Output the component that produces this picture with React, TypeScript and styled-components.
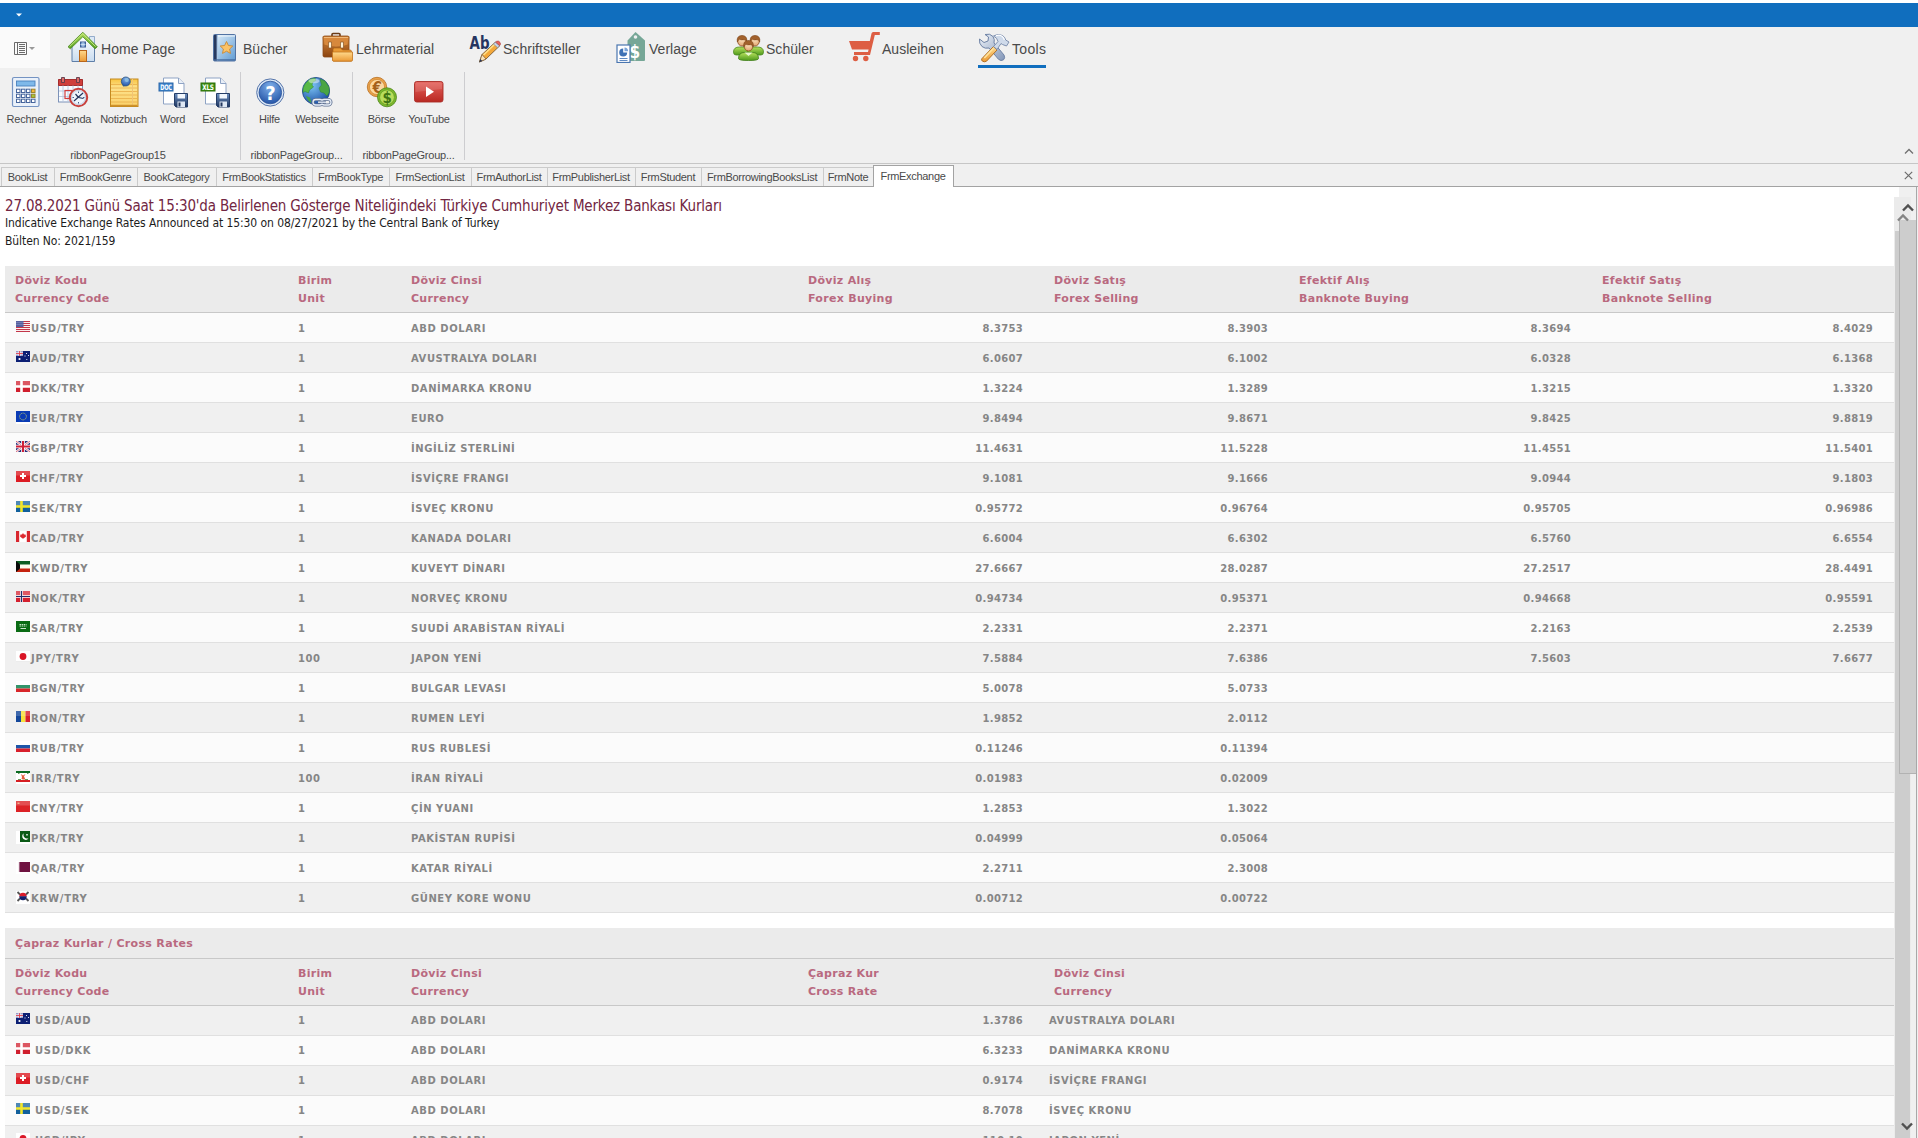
import React from 'react';
import styled, { createGlobalStyle } from 'styled-components';

const UI = '"Liberation Sans", Arial, sans-serif';
const PAGE = '"DejaVu Sans Condensed", "DejaVu Sans", Tahoma, sans-serif';
const TABLE = '"DejaVu Sans", Verdana, sans-serif';

const GlobalStyle = createGlobalStyle`
  *, *::before, *::after { box-sizing: border-box; }
  html, body { margin: 0; padding: 0; overflow: hidden; background: #fff; }
  svg { display: block; flex: none; }
`;

const Window = styled.div`
  display: flex;
  flex-direction: column;
  width: 1918px;
  height: 1138px;
  padding-top: 3px;
  overflow: hidden;
  background: #fff;
  font-family: ${UI};
  color: #4a4a4a;
`;

const TitleBar = styled.header`
  display: flex;
  align-items: center;
  flex: none;
  height: 24px;
  padding-left: 16px;
  background: #106ebe;
`;

const Ribbon = styled.section`
  display: flex;
  flex-direction: column;
  flex: none;
  height: 137px;
  background: #f0f0f0;
  border-bottom: 1px solid #c6c6c6;
`;

const RibbonTabs = styled.nav`
  display: flex;
  height: 41px;
`;

const FileMenu = styled.div`
  display: flex;
  align-items: center;
  gap: 2px;
  width: 50px;
  margin-right: 17px;
  padding: 2px 0 0 14px;
  background: #fafafa;
`;

const RibbonTab = styled.div<{ $w: number }>`
  display: flex;
  width: ${(p) => p.$w}px;
`;

const TabFace = styled.div<{ $active?: boolean }>`
  display: flex;
  align-items: center;
  gap: 2px;
  height: 41px;
  padding-top: 4px;
  padding-bottom: 2px;
  border-bottom: 3px solid ${(p) => (p.$active ? '#106ebe' : 'transparent')};
  font-size: 14px;
  line-height: 18px;
  white-space: nowrap;
  letter-spacing: ${(p) => (p.$active ? '0.3px' : '0.03px')};
`;

const TabLabel = styled.span`
  padding-top: 4px;
`;

const RibbonBody = styled.div`
  display: flex;
  align-items: flex-start;
  flex: 1;
  padding-top: 4px;
`;

const Group = styled.div<{ $w: number; $pad: number }>`
  display: flex;
  flex-direction: column;
  justify-content: space-between;
  width: ${(p) => p.$w}px;
  height: 88px;
  padding-left: ${(p) => p.$pad}px;
  border-right: 1px solid #cdcdd0;
`;

const GroupItems = styled.div`
  display: flex;
`;

const GroupCaption = styled.div<{ $pad: number; $shift: number }>`
  margin-left: -${(p) => p.$pad}px;
  margin-bottom: -1px;
  padding-right: ${(p) => p.$shift}px;
  font-size: 11px;
  line-height: 12px;
  letter-spacing: -0.22px;
  text-align: center;
  white-space: nowrap;
`;

const ToolButton = styled.div<{ $w: number }>`
  display: flex;
  flex-direction: column;
  align-items: center;
  gap: 5px;
  width: ${(p) => p.$w}px;
  padding-top: 4px;
  font-size: 11px;
  line-height: 13px;
  letter-spacing: -0.25px;
  white-space: nowrap;
`;

const RibbonEnd = styled.div`
  display: flex;
  flex: 1;
  align-self: stretch;
  align-items: flex-end;
  justify-content: flex-end;
  padding: 0 4px 9px 0;
`;

const DocTabs = styled.div`
  display: flex;
  align-items: flex-end;
  flex: none;
  height: 23px;
  padding-left: 1px;
  background: #f0f0f0;
  border-bottom: 1px solid #a3a3a3;
`;

const DocTab = styled.div<{ $w: number; $active?: boolean }>`
  display: flex;
  align-items: center;
  justify-content: center;
  width: ${(p) => p.$w}px;
  height: ${(p) => (p.$active ? 22 : 19)}px;
  margin-bottom: ${(p) => (p.$active ? -1 : 0)}px;
  padding-right: 1px;
  padding-bottom: ${(p) => (p.$active ? 1 : 0)}px;
  border: 1px solid ${(p) => (p.$active ? '#a3a3a3' : '#cbcbcb')};
  border-bottom: 0;
  border-right-width: ${(p) => (p.$active ? 1 : 0)}px;
  background: ${(p) => (p.$active ? '#fff' : '#f0f0f0')};
  font-size: 11px;
  letter-spacing: -0.31px;
  white-space: nowrap;
`;

const DocTabsEnd = styled.div`
  display: flex;
  flex: 1;
  align-self: stretch;
  align-items: center;
  justify-content: flex-end;
  padding: 0 5px 0 0;
`;

const Workspace = styled.main`
  display: flex;
  flex: 1;
  min-height: 0;
  overflow: hidden;
`;

const Page = styled.article`
  flex: none;
  width: 1894px;
  height: 951px;
  padding: 10px 0 0 5px;
  overflow: hidden;
  background: #fff;
  font-family: ${PAGE};
`;

const Headline = styled.h1`
  margin: 0;
  font-size: 15px;
  font-weight: 400;
  line-height: 19px;
  letter-spacing: -0.18px;
  color: #722642;
`;

const Subline = styled.p<{ $h: number }>`
  margin: 0;
  font-size: 12px;
  line-height: ${(p) => p.$h}px;
  letter-spacing: -0.08px;
  color: #1c1c1c;
`;

const RateTable = styled.section<{ $top: number }>`
  margin-top: ${(p) => p.$top}px;
  font-family: ${TABLE};
`;

const columns = '283px 113px 397px 246px 245px 303px 302px';

const TableCaption = styled.div`
  height: 31px;
  padding: 1px 10px 0;
  background: #ebebeb;
  border-bottom: 1px solid #c8c8c8;
  color: #b9697f;
  font-size: 11px;
  font-weight: 700;
  line-height: 30px;
  letter-spacing: 0.32px;
`;

const HeadRow = styled.div`
  display: grid;
  grid-template-columns: ${columns};
  height: 47px;
  padding-top: 6px;
  background: #ebebeb;
  border-bottom: 1px solid #c8c8c8;
`;

const HeadCell = styled.div`
  padding-left: 10px;
  color: #b9697f;
  font-size: 11px;
  font-weight: 700;
  line-height: 18px;
  letter-spacing: 0.3px;
`;

const Row = styled.div<{ $shade: boolean; $lift?: boolean }>`
  display: grid;
  grid-template-columns: ${columns};
  height: 30px;
  background: ${(p) => (p.$shade ? '#f0f0f0' : '#fbfbfb')};
  border-bottom: 1px solid #e0e0e0;
  color: #868686;
  font-size: 10px;
  font-weight: 700;
  line-height: ${(p) => (p.$lift ? 29 : 31)}px;
  letter-spacing: 0.55px;
`;

const CodeCell = styled.div<{ $gap: number }>`
  display: flex;
  gap: ${(p) => p.$gap}px;
  padding-left: 11px;
  letter-spacing: 0.75px;
`;

const FlagBox = styled.span<{ $white: boolean; $top: number }>`
  display: block;
  height: 13px;
  margin-top: ${(p) => p.$top}px;
  background: ${(p) => (p.$white ? '#fff' : 'transparent')};
`;

const Cell = styled.div<{ $pad?: number }>`
  padding-left: ${(p) => p.$pad ?? 10}px;
`;

const NumCell = styled.div`
  padding-right: 21px;
  letter-spacing: 0.3px;
  text-align: right;
`;

const ScrollArea = styled.aside`
  position: relative;
  flex: none;
  width: 24px;
  height: 951px;
  background: #f0f0f0;
`;

const WhiteCorner = styled.div`
  height: 10px;
  width: 5px;
  background: #fff;
`;

const GhostBar = styled.div`
  position: absolute;
  top: 10px;
  left: 0;
  width: 17px;
  height: 941px;
  padding-top: 34px;
  background: #ebebeb;
`;

const GhostThumb = styled.div`
  height: 100%;
  margin-left: 1px;
  width: 15px;
  background: #cdcdcd;
`;

const FrontBar = styled.div`
  position: absolute;
  top: 0;
  left: 5px;
  width: 18px;
  height: 951px;
  border-right: 1px solid #a8a8a8;
`;

const FrontThumb = styled.div`
  margin-top: 33px;
  height: 554px;
  border: 1px solid #b2b2b2;
  border-top: 0;
  border-right: 0;
  background: #cdcdcd;
`;

const Mark = styled.span<{ $x: number; $y: number }>`
  position: absolute;
  left: ${(p) => p.$x}px;
  top: ${(p) => p.$y}px;
`;

/* ---------- ribbon icons, all on a 32 unit grid ---------- */

const Icon = ({ children }: { children: React.ReactNode }) => (
  <svg width="32" height="32" viewBox="0 0 32 32">{children}</svg>
);

const Gradients = () => (
  <svg width="0" height="0">
    <defs>
      <linearGradient id="gOrange" x1="0" y1="0" x2="0" y2="1"><stop offset="0" stopColor="#ffd98c" /><stop offset="1" stopColor="#eb9a35" /></linearGradient>
      <linearGradient id="gBrown" x1="0" y1="0" x2="0" y2="1"><stop offset="0" stopColor="#d98a3c" /><stop offset="1" stopColor="#8a4310" /></linearGradient>
      <linearGradient id="gBlue" x1="0" y1="0" x2="1" y2="1"><stop offset="0" stopColor="#e3f1fb" /><stop offset="1" stopColor="#5f9bd2" /></linearGradient>
      <linearGradient id="gHouse" x1="0" y1="0" x2="0" y2="1"><stop offset="0" stopColor="#ffffff" /><stop offset="1" stopColor="#c9dcf0" /></linearGradient>
      <linearGradient id="gGreen" x1="0" y1="0" x2="0" y2="1"><stop offset="0" stopColor="#b5e05c" /><stop offset="1" stopColor="#4f9a1c" /></linearGradient>
      <linearGradient id="gRed" x1="0" y1="0" x2="0" y2="1"><stop offset="0" stopColor="#e5625c" /><stop offset="1" stopColor="#b92923" /></linearGradient>
      <linearGradient id="gNote" x1="0" y1="0" x2="0" y2="1"><stop offset="0" stopColor="#f9c440" /><stop offset="0.3" stopColor="#fde28c" /><stop offset="1" stopColor="#fbd16a" /></linearGradient>
      <linearGradient id="gSteel" x1="0" y1="0" x2="1" y2="1"><stop offset="0" stopColor="#eef3f9" /><stop offset="1" stopColor="#8296b8" /></linearGradient>
      <linearGradient id="gNavy" x1="0" y1="0" x2="0" y2="1"><stop offset="0" stopColor="#6d8fc0" /><stop offset="1" stopColor="#1d355f" /></linearGradient>
      <radialGradient id="gHelp" cx="0.5" cy="0.25" r="0.8"><stop offset="0" stopColor="#7fb0ea" /><stop offset="1" stopColor="#1f4fa3" /></radialGradient>
      <radialGradient id="gGlobe" cx="0.35" cy="0.3" r="0.8"><stop offset="0" stopColor="#7cc4f5" /><stop offset="1" stopColor="#14459c" /></radialGradient>
      <radialGradient id="gFace" cx="0.5" cy="0.3" r="0.8"><stop offset="0" stopColor="#ffe7c4" /><stop offset="1" stopColor="#dd9a62" /></radialGradient>
    </defs>
  </svg>
);

const HomeIcon = () => (
  <Icon>
    <path d="M22.5 5.5h5v9h-5z" fill="#dce8f5" stroke="#7f9cc0" strokeWidth="0.8" />
    <path d="M5 15 16 4.5 27.5 15V30.5H5z" fill="url(#gHouse)" stroke="#5f7fa8" strokeWidth="1" />
    <path d="M1 15.8 15.8 1.2 30.3 15.8 28 17.8 15.8 5.8 3.3 17.8z" fill="url(#gGreen)" stroke="#4c8a22" strokeWidth="0.8" />
    <path d="M2.6 15.6 15.8 2.6 28.6 15.6" fill="none" stroke="#cdec8c" strokeWidth="0.9" />
    <rect x="13.5" y="11" width="5" height="5" fill="#7fa8d8" stroke="#3f5f96" />
    <path d="M16 11v5M13.5 13.5h5" stroke="#dce9f7" strokeWidth="0.7" />
    <rect x="12.5" y="19.5" width="7" height="11" fill="url(#gOrange)" stroke="#b8661c" />
  </Icon>
);

const BookIcon = () => (
  <Icon>
    <rect x="4.5" y="3.5" width="22" height="26.5" rx="1" fill="url(#gBlue)" stroke="#5273a3" />
    <rect x="5" y="4" width="2.8" height="25.5" fill="#26395f" />
    <rect x="7.8" y="4" width="1.2" height="25.5" fill="#a9c6e4" />
    <path d="M9 5h17" stroke="#fff" strokeWidth="1.2" opacity="0.7" />
    <rect x="5" y="28.3" width="21" height="1.2" fill="#44689c" />
    <path d="m17.5 10.5 1.9 4 4.4.5-3.2 3 .9 4.4-4-2.200-4 2.200.9-4.400-3.200-3 4.400-.5z" fill="#fbc368" stroke="#c98a35" strokeWidth="0.9" />
  </Icon>
);

const BriefcaseIcon = () => (
  <Icon>
    <path d="M10 5V3.500q0-1 1-1h6q1 0 1 1V5" fill="none" stroke="#6b3b17" strokeWidth="1.6" />
    <rect x="1" y="5" width="26" height="21" rx="1.5" fill="url(#gBrown)" stroke="#8a4a18" strokeWidth="0.8" />
    <path d="M1 5.500h26l-1 8.500q-12 4-24 0z" fill="#d7883c" stroke="#a05c20" strokeWidth="0.6" />
    <path d="M2 6.500h24" stroke="#f0b878" />
    <path d="M6.500 11h3v6h-3zM18.500 11h3v6h-3z" fill="#fff3da" stroke="#8a5522" strokeWidth="0.7" />
    <path d="M11 18.500q0-1.500 1.500-1.500h6l2 2H28q1.500 0 1.500 1.500V30H11z" fill="#e99a35" stroke="#b06418" strokeWidth="0.7" />
    <path d="M10.500 21h20v8q0 1.200-1.200 1.200H11.700q-1.200 0-1.200-1.200z" fill="url(#gOrange)" stroke="#c1741d" strokeWidth="0.8" />
  </Icon>
);

const IconText = styled.text`
  font-family: ${PAGE};
  font-weight: 700;
`;

const WriterIcon = () => (
  <Icon>
    <IconText x="0.5" y="17.5" fontSize="17" textLength="20" lengthAdjust="spacingAndGlyphs" fill="#263560">Ab</IconText>
    <path d="m10.500 31 2.500-7.500L26 11.500l4.500 3.500L17 28z" fill="#f3a83a" stroke="#7a5a34" strokeWidth="0.9" />
    <path d="m14.500 24 12-11.500" stroke="#ffe08a" strokeWidth="1.6" />
    <path d="m10.500 31 2.500-7.500 4 4.500z" fill="#f8e2bb" stroke="#7a5a34" strokeWidth="0.7" />
    <path d="m10.300 31.300 1-3.200 2 2z" fill="#2c3552" />
    <path d="m24.500 13 2-1.800 4 3.600-2 1.800z" fill="#c8d3e5" stroke="#7487a8" strokeWidth="0.6" />
    <path d="m26.500 11 1.300-.8q2-.6 3.200 1.200t-.3 3.200z" fill="#e8625c" stroke="#a83a35" strokeWidth="0.6" />
  </Icon>
);

const PublisherIcon = () => (
  <Icon>
    <path d="M20.500 1 30 9.500V29q0 1-1 1H12.500V9.500z" fill="#76a797" />
    <circle cx="20.500" cy="6" r="1.8" fill="#f0f0f0" />
    <IconText x="14.5" y="26.5" fontSize="17" fill="#fff">$</IconText>
    <rect x="2" y="14" width="13" height="17.500" fill="#fff" stroke="#4a76b0" strokeWidth="1.2" />
    <path d="M8.200 17.500a4 4 0 1 0 4 4h-4z" fill="#3f72b5" />
    <path d="M9.500 16.500a4 4 0 0 1 3.700 3.700H9.500z" fill="#7aa4d8" />
    <path d="M4.500 27.500h8M4.500 29.500h8" stroke="#5f8ac2" />
  </Icon>
);

const Head = ({ x, y }: { x: number; y: number }) => (
  <g transform={`translate(${x} ${y})`}>
    <ellipse cx="5" cy="5.500" rx="4.400" ry="5" fill="url(#gFace)" stroke="#8a4d20" strokeWidth="0.8" />
    <path d="M.3 6.500Q-.8 0 5 0T9.700 6.500Q9 4 7 4.200 4 4.800 2.500 3.800 1.300 4.200.3 6.500z" fill="#a2612c" stroke="#7a4217" strokeWidth="0.5" />
  </g>
);

const StudentsIcon = () => (
  <Icon>
    <path d="M1.500 21q0-5 6-5h5q4 0 5 4l-2 4H4q-2.500 0-2.500-3z" fill="url(#gGreen)" stroke="#4c8a22" strokeWidth="0.8" />
    <path d="M31.500 21q0-5-6-5h-5q-4 0-5 4l2 4H29q2.500 0 2.500-3z" fill="url(#gGreen)" stroke="#4c8a22" strokeWidth="0.8" />
    <Head x={5} y={4.5} />
    <Head x={18} y={4.5} />
    <path d="M6.500 27.500q0-6 6-6h8q6 0 6 6 0 2-10 2t-10-2z" fill="url(#gGreen)" stroke="#3f7d18" strokeWidth="0.8" />
    <path d="m12.500 21.500 4 3.500 4-3.500z" fill="#e8f7cf" />
    <Head x={11.5} y={9.5} />
  </Icon>
);

const CartIcon = () => (
  <Icon>
    <path d="M1 10h20.800l1.700-7.500q.2-1.500 1.700-1.500h6.600v3h-5l-4.800 20H6v-3h14l.6-2.500H4z" fill="#dd5e43" />
    <circle cx="7.5" cy="27.5" r="2.7" fill="#dd5e43" />
    <circle cx="17.8" cy="27.5" r="2.7" fill="#dd5e43" />
  </Icon>
);

const ToolsIcon = () => (
  <Icon>
    <path d="M1.500 8 6 11.500l4-1.500.5-4L7 3.500q5-1.500 8 2 2 3 1 6.500l10 12q1.500 3-.5 4.800-2.500 1.700-5-.5L11 17q-4 1-7-1.500Q.8 12.500 1.500 8z" fill="url(#gSteel)" stroke="#6f83a6" strokeWidth="1" />
    <path d="m4 27.500 11.500-12 3.500 3.500L8.500 30.200q-2.300 1.200-4 0T4 27.500z" fill="url(#gOrange)" stroke="#a8661c" strokeWidth="0.9" />
    <path d="m6.300 27 9.200-9.700" stroke="#ffe4a0" strokeWidth="1.6" />
    <path d="m15.500 15.500 4.500-5q-.5-3.500-4.500-5.500 4.500-3 9-.5 2.500 1.500 3.200 4.500l3.300 2-2.500 4-4-1.500-1.500-1-4 6z" fill="#cfdaea" stroke="#7487a8" strokeWidth="0.9" />
    <path d="M18 4.600q4-1.200 6.500 1 1.500 1.500 1.800 3.400" fill="none" stroke="#fff" strokeWidth="1.2" />
  </Icon>
);

const CalculatorIcon = () => (
  <Icon>
    <rect x="1.5" y="1.500" width="26.500" height="29" rx="1.500" fill="#eaf1fa" stroke="#7493c2" strokeWidth="1.2" />
    <rect x="5.500" y="5" width="18.500" height="5" fill="#7fb9ea" stroke="#4b82bd" strokeWidth="0.9" />
    {[0, 1, 2].map((r) =>
      [0, 1, 2, 3].map((c) => (
        <rect
          key={`${r}${c}`}
          x={5.500 + c * 5}
          y={13.200 + r * 5}
          width="3.500"
          height="3.300"
          fill={c === 3 && r === 0 ? '#f6b73c' : c === 3 && r === 1 ? '#a4c639' : '#fff'}
          stroke={c === 3 && r < 2 ? '#9a8430' : '#46659c'}
          strokeWidth="1"
        />
      )),
    )}
  </Icon>
);

const AgendaIcon = () => (
  <Icon>
    <rect x="1.500" y="4" width="24" height="22" fill="#f8fbff" stroke="#7d92b8" />
    <path d="M1.500 3.500h24v6h-24z" fill="#cf3f3c" stroke="#a52d2c" />
    <path d="M4.500 1.500h3v5h-3zM19.500 1.500h3v5h-3z" fill="#dc6a66" stroke="#5d3b4a" strokeWidth="0.9" />
    <path d="M6 9.500V26M11 9.500V26M16 9.500V26M21 9.500V16M2 15h23M2 20.500h14" stroke="#b8c6de" strokeWidth="0.9" />
    <rect x="8" y="14.500" width="7" height="8" fill="none" stroke="#d13c3c" strokeWidth="1.200" />
    <circle cx="21.500" cy="21.500" r="8.700" fill="#eef4fc" stroke="#c8403c" strokeWidth="2" />
    <circle cx="21.500" cy="21.500" r="7" fill="none" stroke="#9fb0cc" strokeWidth="0.600" />
    <path d="m17 25 9-8M21.500 21.500l5 1M18.500 18l3 3.500" stroke="#24365e" strokeWidth="1.200" />
    <path d="M21.500 15.500v1.500M21.500 26v1.500M15.500 21.500H17M26 21.500h1.500" stroke="#445f8c" />
  </Icon>
);

const NoteIcon = () => (
  <Icon>
    <rect x="2.500" y="3" width="27.500" height="27.500" fill="url(#gNote)" stroke="#c48a20" />
    <path d="M3 8.500h26.500M3 12h26.500M3 15.500h26.500M3 19h26.500M3 22.500h26.500M3 26h26.500" stroke="#e8ad48" strokeWidth="0.8" />
    <path d="M24.500 3v27" stroke="#f0c476" />
    <path d="M3 29.500h26.500" stroke="#cf912b" strokeWidth="1.500" />
    <path d="m14 9 4-2.500L16 11z" fill="#4a6a94" />
    <circle cx="17.800" cy="5.500" r="4.500" fill="url(#gHelp)" stroke="#31577f" strokeWidth="0.8" />
    <circle cx="18.800" cy="4" r="2" fill="#8bbbe0" />
  </Icon>
);

const SaveDocIcon = ({ label, color, edge }: { label: string; color: string; edge: string }) => (
  <Icon>
    <path d="M6.500 2h15l5.500 5.500v20.500H6.500z" fill="#fff" stroke="#8ea3c4" />
    <path d="M21.500 2v5.500H27" fill="#e8eef7" stroke="#8ea3c4" />
    <rect x="2" y="7" width="14" height="8" fill={color} stroke={edge} />
    <IconText x="3.200" y="13.800" fontSize="7.500" textLength="11.600" lengthAdjust="spacingAndGlyphs" fill="#fff">{label}</IconText>
    <path d="M17.500 17.500h13v13.500H19l-1.500-1.500z" fill="url(#gNavy)" stroke="#263e68" />
    <rect x="20.500" y="18" width="7.500" height="4.500" fill="#f2f7fd" />
    <rect x="20.500" y="25.500" width="7.500" height="5.500" fill="#dfe8f4" />
    <rect x="21.500" y="26.500" width="2" height="4" fill="#22375e" />
  </Icon>
);

const HelpIcon = () => (
  <Icon>
    <circle cx="16.300" cy="16.500" r="13.600" fill="#dce8f6" stroke="#5675aa" strokeWidth="1" />
    <circle cx="16.300" cy="16.500" r="11.300" fill="url(#gHelp)" stroke="#2a5298" strokeWidth="0.8" />
    <IconText x="16.300" y="23.500" fontSize="20" textAnchor="middle" fill="#fff">?</IconText>
  </Icon>
);

const GlobeIcon = () => (
  <Icon>
    <circle cx="15" cy="15" r="13.600" fill="url(#gGlobe)" stroke="#1c4585" strokeWidth="0.8" />
    <path d="M4 8q4-6 10-6l1 2.500-3 1.500-1 3 1.500 2-4 3-1 3L4 15.500l-2 1Q1.500 11.500 4 8z" fill="#58b947" stroke="#2c8040" strokeWidth="0.5" />
    <path d="M5 20l4 1.500 1.500 5.500q-4-2-5.500-7z" fill="#49a544" />
    <path d="m19 3 5 2 4 6 .3 5-2.300 4-3-3-3.500-1-1.500-4 2.500-3z" fill="#49a544" stroke="#2c8040" strokeWidth="0.5" />
    <ellipse cx="13" cy="5" rx="5.500" ry="2.300" fill="#fff" opacity="0.450" />
    <rect x="12" y="23.500" width="9.500" height="5.500" rx="2.700" fill="none" stroke="#5d6f90" strokeWidth="3" />
    <rect x="20.500" y="23.500" width="9.500" height="5.500" rx="2.700" fill="none" stroke="#5d6f90" strokeWidth="3" />
    <rect x="12" y="23.500" width="9.500" height="5.500" rx="2.700" fill="none" stroke="#e7eef8" strokeWidth="1.300" />
    <rect x="20.500" y="23.500" width="9.500" height="5.500" rx="2.700" fill="none" stroke="#e7eef8" strokeWidth="1.300" />
    <path d="M17 26.200h8" stroke="#5d6f90" strokeWidth="3" />
    <path d="M17 26.200h8" stroke="#e7eef8" strokeWidth="1.300" />
  </Icon>
);

const ExchangeIcon = () => (
  <Icon>
    <circle cx="11" cy="11" r="9.700" fill="#e9a04a" stroke="#b76f1f" strokeWidth="0.8" />
    <circle cx="11" cy="11" r="7.600" fill="#fbd7a0" stroke="#d08a35" strokeWidth="0.8" />
    <IconText x="11" y="16.500" fontSize="15" textAnchor="middle" fill="#a5611b">€</IconText>
    <circle cx="21" cy="21.300" r="9.500" fill="#7cb82f" stroke="#4d8516" strokeWidth="0.8" />
    <circle cx="21" cy="21.300" r="7.400" fill="#b7dd5c" stroke="#66a022" strokeWidth="0.8" />
    <IconText x="21" y="26.800" fontSize="15" textAnchor="middle" fill="#3e7412">$</IconText>
  </Icon>
);

const VideoIcon = () => (
  <Icon>
    <rect x="1.500" y="5.500" width="28.500" height="20.500" rx="2.200" fill="url(#gRed)" stroke="#a92c27" strokeWidth="0.9" />
    <path d="M2.500 16V8q0-1.500 1.500-1.500h23.500q1.500 0 1.500 1.500v5z" fill="#fff" opacity="0.120" />
    <path d="m13 10.500 8 5.200-8 5.200z" fill="#fff" />
  </Icon>
);

const ribbonTabs = [
  { label: 'Home Page', icon: <HomeIcon />, w: 142 },
  { label: 'Bücher', icon: <BookIcon />, w: 113 },
  { label: 'Lehrmaterial', icon: <BriefcaseIcon />, w: 147 },
  { label: 'Schriftsteller', icon: <WriterIcon />, w: 146 },
  { label: 'Verlage', icon: <PublisherIcon />, w: 117 },
  { label: 'Schüler', icon: <StudentsIcon />, w: 116 },
  { label: 'Ausleihen', icon: <CartIcon />, w: 130 },
  { label: 'Tools', icon: <ToolsIcon />, w: 70, active: true },
];

const groups = [
  {
    caption: 'ribbonPageGroup15', w: 241, pad: 3, shift: 4,
    items: [
      { label: 'Rechner', w: 47, icon: <CalculatorIcon /> },
      { label: 'Agenda', w: 46, icon: <AgendaIcon /> },
      { label: 'Notizbuch', w: 55, icon: <NoteIcon /> },
      { label: 'Word', w: 43, icon: <SaveDocIcon label="DOC" color="#3f87cf" edge="#2a66a8" /> },
      { label: 'Excel', w: 42, icon: <SaveDocIcon label="XLS" color="#3d8f12" edge="#2c6f0b" /> },
    ],
  },
  {
    caption: 'ribbonPageGroup...', w: 112, pad: 6, shift: 0,
    items: [
      { label: 'Hilfe', w: 45, icon: <HelpIcon /> },
      { label: 'Webseite', w: 50, icon: <GlobeIcon /> },
    ],
  },
  {
    caption: 'ribbonPageGroup...', w: 112, pad: 7, shift: 0,
    items: [
      { label: 'Börse', w: 43, icon: <ExchangeIcon /> },
      { label: 'YouTube', w: 52, icon: <VideoIcon /> },
    ],
  },
];

const docTabs: [string, number][] = [
  ['BookList', 53], ['FrmBookGenre', 83], ['BookCategory', 79], ['FrmBookStatistics', 96],
  ['FrmBookType', 77], ['FrmSectionList', 82], ['FrmAuthorList', 76], ['FrmPublisherList', 88],
  ['FrmStudent', 66], ['FrmBorrowingBooksList', 122], ['FrmNote', 50],
];

/* ---------- flags, 14 by 11 ---------- */

const cross = (bg: string, fg: string, inner?: string) => (
  <>
    <rect width="14" height="11" fill={bg} />
    <rect width="14" height="5" fill="#fff" opacity="0.250" />
    <path d="M0 5.500h14M5.500 0v11" stroke={fg} strokeWidth={2.6} />
    {inner && <path d="M0 5.500h14M5.500 0v11" stroke={inner} strokeWidth={1.2} />}
  </>
);

const flags: Record<string, React.ReactNode> = {
  USD: (
    <>
      <rect width="14" height="11" fill="#fbeeee" />
      <path d="M0 .5h14M0 2.500h14M0 4.500h14M0 6.500h14M0 8.500h14M0 10.500h14" stroke="#c2364a" strokeWidth="1" />
      <rect width="7.500" height="6" fill="#5560a0" />
      <path d="M.5 1.500h7M.5 3.500h7" stroke="#b9bfe0" strokeWidth="0.6" strokeDasharray="1 1" />
    </>
  ),
  AUD: (
    <>
      <rect width="14" height="11" fill="#0c1f74" />
      <rect width="7" height="5" fill="#9a9cc8" />
      <path d="M0 2.500h7M3.500 0v5" stroke="#fff" strokeWidth="1.8" />
      <path d="M0 2.500h7M3.500 0v5" stroke="#d84050" strokeWidth="0.9" />
      <circle cx="3.500" cy="8" r="1.100" fill="#fff" />
      <path d="M10 2h1v1h-1zM8.500 4.500h1v1h-1zM12 4h1v1h-1zM10.300 8h1v1h-1z" fill="#dfe4f7" />
    </>
  ),
  DKK: cross('#d01f2e', '#fff'),
  EUR: (
    <>
      <rect width="14" height="11" fill="#0a3bb5" />
      <circle cx="7" cy="5.500" r="3.400" fill="none" stroke="#c5cf6a" strokeWidth="1" strokeDasharray="1 0.900" />
    </>
  ),
  GBP: (
    <>
      <rect width="14" height="11" fill="#2b2f78" />
      <path d="m0 0 14 11M14 0 0 11" stroke="#fff" strokeWidth="2.200" />
      <path d="m0 0 14 11M14 0 0 11" stroke="#cc2840" strokeWidth="0.700" />
      <path d="M0 5.500h14M7 0v11" stroke="#fff" strokeWidth="3.600" />
      <path d="M0 5.500h14M7 0v11" stroke="#d01f38" strokeWidth="2" />
    </>
  ),
  CHF: (
    <>
      <rect width="14" height="11" fill="#dc1c24" />
      <rect width="14" height="4.500" fill="#fff" opacity="0.200" />
      <path d="M4 5h6M7 2v6" stroke="#fff" strokeWidth="2" />
    </>
  ),
  SEK: cross('#12609c', '#f3e62a'),
  CAD: (
    <>
      <rect width="14" height="11" fill="#fff" />
      <path d="M0 0h3.200v11H0zM10.800 0H14v11h-3.200z" fill="#d8262e" />
      <path d="m7 2 1 1.500 1.500 0L10 5.500 7.500 7.500h-1L4 5.500l.5-2H6z" fill="#dd2a30" />
    </>
  ),
  KWD: (
    <>
      <rect width="14" height="11" fill="#fbfbee" />
      <path d="M0 0h14v3.500H0z" fill="#0b5c22" />
      <path d="M0 7.500h14V11H0z" fill="#c4230f" />
      <path d="m0 0 4 3.500v4L0 11z" fill="#0a0a0a" />
    </>
  ),
  NOK: cross('#d4202f', '#fff', '#1f2f6c'),
  SAR: (
    <>
      <rect width="14" height="11" fill="#0a6b14" />
      <path d="M3.500 3.500h7M3.500 5h7" stroke="#c8e6c8" strokeWidth="1" strokeDasharray="1.500 0.600" />
      <path d="M4.500 7.500h5.500" stroke="#e6f4e6" strokeWidth="0.900" />
    </>
  ),
  JPY: (
    <>
      <rect width="14" height="11" fill="#fff" />
      <circle cx="7" cy="5.500" r="3.400" fill="#da1626" />
      <path d="M0 10.700h14" stroke="#d8d8d8" strokeWidth="0.600" />
    </>
  ),
  BGN: (
    <>
      <rect width="14" height="11" fill="#fff" />
      <path d="M0 4h14v3.500H0z" fill="#32946a" />
      <path d="M0 7.500h14V11H0z" fill="#d8262a" />
    </>
  ),
  RON: (
    <>
      <path d="M0 0h5v11H0z" fill="#14479a" />
      <path d="M5 0h4.500v11H5z" fill="#f7e13a" />
      <path d="M9.500 0H14v11H9.500z" fill="#d8202c" />
      <rect width="14" height="5" fill="#fff" opacity="0.180" />
    </>
  ),
  RUB: (
    <>
      <rect width="14" height="11" fill="#fff" />
      <path d="M0 4h14v3.500H0z" fill="#1d55a8" />
      <path d="M0 7.500h14V11H0z" fill="#d8202c" />
    </>
  ),
  IRR: (
    <>
      <rect width="14" height="11" fill="#fff" />
      <path d="M0 0h14v2H0z" fill="#0b6b22" />
      <path d="M0 9h14v2H0z" fill="#d61e22" />
      <path d="m5 3 2 1.500L9.500 3 8 5.500l1.500 3H7L5.500 8l.5-2z" fill="#e2603c" />
      <path d="M2 2.500h1.500M11 2.500h1.500M2 8.500h3M9 8.500h3" stroke="#6a9a5c" />
    </>
  ),
  CNY: (
    <>
      <rect width="14" height="11" fill="#dc2226" />
      <rect width="14" height="4.500" fill="#fff" opacity="0.200" />
      <path d="M1.500 1.500h2v1.500h-2z" fill="#f3b08a" />
    </>
  ),
  PKR: (
    <>
      <rect width="14" height="11" fill="#fff" />
      <rect x="4" width="10" height="11" fill="#0b5a16" />
      <path d="M7.500 2.300Q5.800 4 6.300 6.200 7.200 9 9.800 9q1.700 0 2.700-1.700-2.500.9-4-.7T7.500 2.300z" fill="#fff" />
      <path d="M10.300 3h1.400v1.400h-1.400z" fill="#fff" />
    </>
  ),
  QAR: (
    <>
      <rect width="14" height="11" fill="#fff" />
      <path d="M4 1h10v10H4L2.500 10l1.500-1-1.500-1L4 7 2.500 6 4 5 2.500 4 4 3 2.500 2z" fill="#6f1240" />
    </>
  ),
  KRW: (
    <>
      <rect width="14" height="11" fill="#fff" />
      <path d="m1.500 1 2.500 2.500M12.500 1 10 3.500M1.500 10 4 7.500M12.500 10 10 7.500" stroke="#555" strokeWidth="1.800" />
      <path d="M3.300 5.500a3.700 3.700 0 0 1 7.400 0z" fill="#dc1c2c" />
      <path d="M3.300 5.200a3.700 4 0 0 0 7.400 0z" fill="#15206e" />
    </>
  ),
};

const Flag = ({ code, top }: { code: string; top: number }) => (
  <FlagBox $top={top} $white={['EUR', 'IRR', 'KRW', 'PKR', 'QAR'].includes(code)}>
    <svg width="14" height="11" viewBox="0 0 14 11">{flags[code]}</svg>
  </FlagBox>
);

type Rate = [string, string, string, string, string, string?, string?];

const rates: Rate[] = [
  ['USD', '1', 'ABD DOLARI', '8.3753', '8.3903', '8.3694', '8.4029'],
  ['AUD', '1', 'AVUSTRALYA DOLARI', '6.0607', '6.1002', '6.0328', '6.1368'],
  ['DKK', '1', 'DANİMARKA KRONU', '1.3224', '1.3289', '1.3215', '1.3320'],
  ['EUR', '1', 'EURO', '9.8494', '9.8671', '9.8425', '9.8819'],
  ['GBP', '1', 'İNGİLİZ STERLİNİ', '11.4631', '11.5228', '11.4551', '11.5401'],
  ['CHF', '1', 'İSVİÇRE FRANGI', '9.1081', '9.1666', '9.0944', '9.1803'],
  ['SEK', '1', 'İSVEÇ KRONU', '0.95772', '0.96764', '0.95705', '0.96986'],
  ['CAD', '1', 'KANADA DOLARI', '6.6004', '6.6302', '6.5760', '6.6554'],
  ['KWD', '1', 'KUVEYT DİNARI', '27.6667', '28.0287', '27.2517', '28.4491'],
  ['NOK', '1', 'NORVEÇ KRONU', '0.94734', '0.95371', '0.94668', '0.95591'],
  ['SAR', '1', 'SUUDİ ARABİSTAN RİYALİ', '2.2331', '2.2371', '2.2163', '2.2539'],
  ['JPY', '100', 'JAPON YENİ', '7.5884', '7.6386', '7.5603', '7.6677'],
  ['BGN', '1', 'BULGAR LEVASI', '5.0078', '5.0733'],
  ['RON', '1', 'RUMEN LEYİ', '1.9852', '2.0112'],
  ['RUB', '1', 'RUS RUBLESİ', '0.11246', '0.11394'],
  ['IRR', '100', 'İRAN RİYALİ', '0.01983', '0.02009'],
  ['CNY', '1', 'ÇİN YUANI', '1.2853', '1.3022'],
  ['PKR', '1', 'PAKİSTAN RUPİSİ', '0.04999', '0.05064'],
  ['QAR', '1', 'KATAR RİYALİ', '2.2711', '2.3008'],
  ['KRW', '1', 'GÜNEY KORE WONU', '0.00712', '0.00722'],
];

const crossRates: [string, string, string][] = [
  ['AUD', '1.3786', 'AVUSTRALYA DOLARI'],
  ['DKK', '6.3233', 'DANİMARKA KRONU'],
  ['CHF', '0.9174', 'İSVİÇRE FRANGI'],
  ['SEK', '8.7078', 'İSVEÇ KRONU'],
  ['JPY', '110.10', 'JAPON YENİ'],
];

const rateHeads = [
  ['Döviz Kodu', 'Currency Code'], ['Birim', 'Unit'], ['Döviz Cinsi', 'Currency'],
  ['Döviz Alış', 'Forex Buying'], ['Döviz Satış', 'Forex Selling'],
  ['Efektif Alış', 'Banknote Buying'], ['Efektif Satış', 'Banknote Selling'],
];

const crossHeads = [
  ['Döviz Kodu', 'Currency Code'], ['Birim', 'Unit'], ['Döviz Cinsi', 'Currency'],
  ['Çapraz Kur', 'Cross Rate'], ['Döviz Cinsi', 'Currency'],
];

const Heads = ({ items }: { items: string[][] }) => (
  <HeadRow>
    {items.map(([tr, en], i) => (
      <HeadCell key={i}>{tr}<br />{en}</HeadCell>
    ))}
  </HeadRow>
);

const Arrow = ({ color, down }: { color: string; down?: boolean }) => (
  <svg width="12" height="9" viewBox="0 0 12 9">
    <path d={down ? 'M1 1.500 6 6.500 11 1.500' : 'M1 7.500 6 2.500 11 7.500'} fill="none" stroke={color} strokeWidth="2.400" />
  </svg>
);

export default function App() {
  return (
    <Window>
      <GlobalStyle />
      <TitleBar>
        <svg width="6" height="4" viewBox="0 0 6 4"><path d="M0 .5h6L3 3.500z" fill="#fff" /></svg>
      </TitleBar>
      <Ribbon>
        <RibbonTabs>
          <FileMenu>
            <svg width="13" height="15" viewBox="0 0 13 15">
              <path d="M.5 1.500h12v12H.5zM3.500 1.500v12" fill="none" stroke="#6a6a6a" />
              <path d="M5 3.500h6M5 5.500h6M5 7.500h6M5 9.500h6M5 11.500h6" stroke="#6a6a6a" strokeWidth="1" />
            </svg>
            <svg width="6" height="3" viewBox="0 0 6 3"><path d="M0 0h6L3 3z" fill="#999" /></svg>
          </FileMenu>
          {ribbonTabs.map((t) => (
            <RibbonTab key={t.label} $w={t.w}>
              <TabFace $active={t.active}>{t.icon}<TabLabel>{t.label}</TabLabel></TabFace>
            </RibbonTab>
          ))}
        </RibbonTabs>
        <RibbonBody>
          {groups.map((g, i) => (
            <Group key={i} $w={g.w} $pad={g.pad}>
              <GroupItems>
                {g.items.map((b) => (
                  <ToolButton key={b.label} $w={b.w}>{b.icon}{b.label}</ToolButton>
                ))}
              </GroupItems>
              <GroupCaption $pad={g.pad} $shift={g.shift}>{g.caption}</GroupCaption>
            </Group>
          ))}
          <RibbonEnd>
            <svg width="10" height="6" viewBox="0 0 10 6"><path d="M1 5.500 5 1.500 9 5.500" fill="none" stroke="#707070" strokeWidth="1.300" /></svg>
          </RibbonEnd>
        </RibbonBody>
      </Ribbon>
      <DocTabs>
        {docTabs.map(([label, w]) => <DocTab key={label} $w={w}>{label}</DocTab>)}
        <DocTab $w={81} $active>FrmExchange</DocTab>
        <DocTabsEnd>
          <svg width="9" height="9" viewBox="0 0 9 9"><path d="m.8.8 7.400 7.400M8.200.8.800 8.200" stroke="#6c6c6c" strokeWidth="1.200" /></svg>
        </DocTabsEnd>
      </DocTabs>
      <Workspace>
        <Page>
          <Headline>27.08.2021 Günü Saat 15:30'da Belirlenen Gösterge Niteliğindeki Türkiye Cumhuriyet Merkez Bankası Kurları</Headline>
          <Subline $h={15}>Indicative Exchange Rates Announced at 15:30 on 08/27/2021 by the Central Bank of Turkey</Subline>
          <Subline $h={21}>Bülten No: 2021/159</Subline>
          <RateTable $top={14}>
            <Heads items={rateHeads} />
            {rates.map(([code, unit, name, ...values], i) => (
              <Row key={code} $shade={i % 2 === 1}>
                <CodeCell $gap={1}><Flag code={code} top={8} />{code}/TRY</CodeCell>
                <Cell>{unit}</Cell>
                <Cell>{name}</Cell>
                {values.map((v, n) => <NumCell key={n}>{v}</NumCell>)}
              </Row>
            ))}
          </RateTable>
          <RateTable $top={15}>
            <TableCaption>Çapraz Kurlar / Cross Rates</TableCaption>
            <Heads items={crossHeads} />
            {crossRates.map(([code, rate, name], i) => (
              <Row key={code} $shade={i % 2 === 0} $lift>
                <CodeCell $gap={5}><Flag code={code} top={7} />USD/{code}</CodeCell>
                <Cell>1</Cell>
                <Cell>ABD DOLARI</Cell>
                <NumCell>{rate}</NumCell>
                <Cell $pad={5}>{name}</Cell>
              </Row>
            ))}
          </RateTable>
        </Page>
        <ScrollArea>
          <WhiteCorner />
          <GhostBar><GhostThumb /></GhostBar>
          <FrontBar><FrontThumb /></FrontBar>
          <Mark $x={3} $y={26}><Arrow color="#858585" /></Mark>
          <Mark $x={8} $y={16}><Arrow color="#505050" /></Mark>
          <Mark $x={7} $y={935}><Arrow color="#505050" down /></Mark>
        </ScrollArea>
      </Workspace>
      <Gradients />
    </Window>
  );
}
